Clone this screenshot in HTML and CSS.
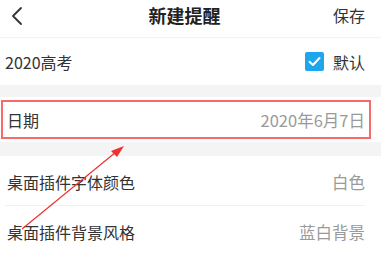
FILE: index.html
```html
<!DOCTYPE html>
<html lang="zh-CN">
<head>
  <meta charset="UTF-8">
  <meta name="viewport" content="width=device-width, initial-scale=1.0">
  <title>新建提醒</title>
  <link rel="stylesheet" href="styles.css">
</head>
<body>
  <div class="topbar">
    <svg class="back" width="14" height="20" viewBox="0 0 14 20">
      <path d="M11 2 L3 10 L11 18" fill="none" stroke="#333" stroke-width="1.8" stroke-linecap="round" stroke-linejoin="round"/>
    </svg>
    <div class="title">新建提醒</div>
    <div class="save">保存</div>
  </div>

  <div class="row row-first">
    <span class="label">2020高考</span>
    <span class="check-wrap">
      <span class="checkbox">
        <svg width="19" height="19" viewBox="0 0 19 19">
          <path d="M4.5 9.8 L8 13 L14.5 6" fill="none" stroke="#fff" stroke-width="2" stroke-linecap="round" stroke-linejoin="round"/>
        </svg>
      </span>
      <span class="check-text">默认</span>
    </span>
  </div>

  <div class="gap gap-a"></div>

  <div class="row row-date">
    <div class="mark">
      <span class="label">日期</span>
      <span class="value">2020年6月7日</span>
    </div>
  </div>

  <div class="gap gap-b"></div>

  <div class="row row-tall">
    <span class="label">桌面插件字体颜色</span>
    <span class="value">白色</span>
  </div>
  <div class="divider"></div>
  <div class="row row-tall">
    <span class="label">桌面插件背景风格</span>
    <span class="value">蓝白背景</span>
  </div>

  <!-- annotation arrow -->
  <svg class="arrow" width="381" height="257" viewBox="0 0 381 257">
    <line x1="22" y1="229" x2="116" y2="152" stroke="#f03030" stroke-width="1.2"/>
    <path d="M124 146 L111 151 L117 157 Z" fill="#f03030"/>
  </svg>
</body>
</html>
```

FILE: styles.css
```css
body {
  margin: 0;
  width: 381px;
  height: 257px;
  overflow: hidden;
  position: relative;
  background-color: #fff;
  font-family: "Noto Sans CJK SC", "Noto Sans", sans-serif;
  color: #333;
}
.topbar {
  height: 38px;
  box-sizing: border-box;
  display: flex;
  align-items: center;
  justify-content: space-between;
  padding: 0 16px 7px 10px;
  border-bottom: 1px solid #f2f2f2;
}
.back {
  margin-top: 1px;
}
.title {
  font-size: 18px;
  font-weight: bold;
  color: #222;
  margin-left: 12px;
}
.save {
  font-size: 16px;
  color: #333;
}
.row {
  display: flex;
  align-items: center;
  justify-content: space-between;
  padding: 0 16px 0 5px;
}
.row-first {
  height: 47px;
}
.label {
  font-size: 16px;
  color: #333;
}
.check-wrap {
  display: flex;
  align-items: center;
}
.checkbox {
  width: 19px;
  height: 19px;
  border-radius: 2px;
  background-color: #1ea6ec;
  display: flex;
  margin-right: 9px;
}
.check-text {
  font-size: 16px;
  color: #333;
}
.gap {
  background-color: #f4f4f4;
}
.gap-a {
  height: 12px;
}
.gap-b {
  height: 14px;
}
.row-date {
  height: 45px;
  padding: 3px 10px 3px 1px;
  box-sizing: border-box;
}
.mark {
  flex: 1;
  height: 100%;
  box-sizing: border-box;
  border: 2px solid #f66a6a;
  display: flex;
  align-items: center;
  justify-content: space-between;
  padding: 0 4px 0 4px;
}
.value {
  font-size: 16.5px;
  color: #9a9a9a;
}
.row-tall {
  height: 49px;
  padding: 3px 16px 0 7px;
  box-sizing: border-box;
}
.row-tall + .divider + .row-tall {
  height: 52px;
  padding-top: 0;
}
.divider {
  height: 1px;
  background-color: #f0f0f0;
  margin: 0 16px 0 5px;
}
.arrow {
  position: absolute;
  left: 0;
  top: 0;
  pointer-events: none;
}
```
